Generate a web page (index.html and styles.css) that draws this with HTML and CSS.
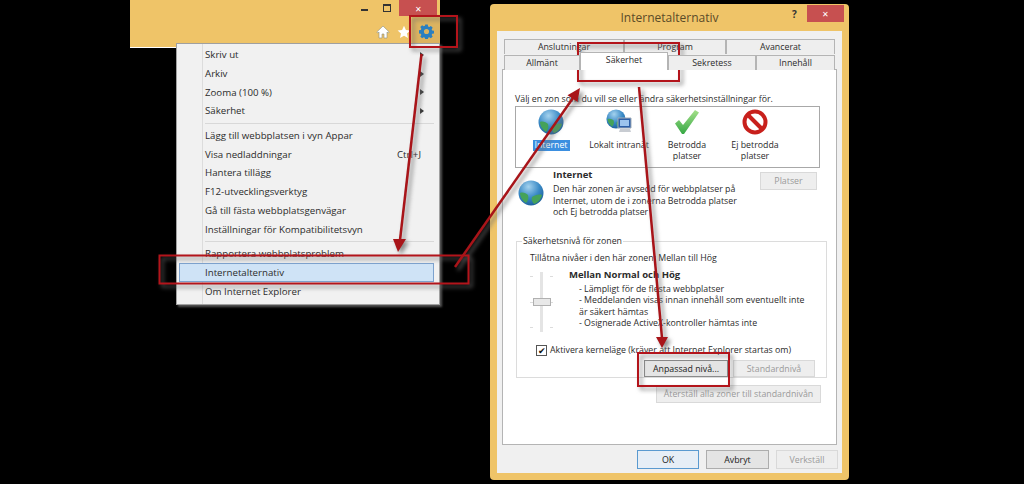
FILE: index.html
```html
<!DOCTYPE html>
<html>
    <head>
        <meta charset="utf-8">
        <title>Internetalternativ</title>
        <link rel="stylesheet" href="styles.css">
    </head>
    <body>
        <svg class="defs" width="0" height="0">
            <defs>
                <radialGradient id="globe-sea" cx="40%" cy="25%" r="80%">
                    <stop offset="0" stop-color="#a4d2ee"/>
                    <stop offset="0.55" stop-color="#3a8ac6"/>
                    <stop offset="1" stop-color="#1a5c98"/>
                </radialGradient>
                <linearGradient id="check-fill" x1="0" y1="0" x2="0" y2="1">
                    <stop offset="0" stop-color="#a5e08a"/>
                    <stop offset="1" stop-color="#36a844"/>
                </linearGradient>
                <symbol id="globe" viewBox="0 0 26 26">
                    <circle cx="13" cy="13" r="12.5" fill="url(#globe-sea)"/>
                    <path d="M2 13c3-1 6 0 8 2 1 3 0 6-2 8-3-2-6-6-6-10zM14 17c3-2 7-3 10-2-1 4-4 8-8 9-2-2-3-5-2-7z" fill="#45a25a"/>
                </symbol>
            </defs>
        </svg>

        <div class="browser-frame">
            <div class="caption-buttons">
                <span class="caption-min"></span>
                <span class="caption-max"></span>
                <span class="caption-close">&#10005;</span>
            </div>
            <div class="toolbar">
                <svg class="tool-icon" viewBox="0 0 14 14"><path d="M7 1 .8 7l1 1L3 7v6h3V9h2v4h3V7l1.200 1 1-1z" fill="#fff" stroke="#8a8f80" stroke-width=".6"/></svg>
                <svg class="tool-icon" viewBox="0 0 14 14"><path d="m7 .8 1.900 4.200 4.500.5-3.400 3 1 4.500L7 10.700 3 13l1-4.500-3.400-3 4.500-.5z" fill="#fff"/></svg>
                <span class="gear-box">
                    <svg class="tool-gear" viewBox="0 0 14 14"><path d="M5.800.5h2.400l.3 1.800 1.100.5 1.500-1 1.700 1.700-1 1.500.5 1.100 1.800.3v2.400l-1.800.3-.5 1.100 1 1.500-1.700 1.700-1.500-1-1.100.5-.3 1.800H5.800l-.3-1.800-1.100-.5-1.500 1-1.700-1.700 1-1.500-.5-1.100-1.800-.3V5.800l1.800-.3.500-1.100-1-1.500 1.700-1.700 1.500 1 1.100-.5zM7 4.600a2.400 2.400 0 1 0 0 4.800 2.400 2.400 0 0 0 0-4.800z" fill="#2a7fc0" fill-rule="evenodd"/></svg>
                </span>
            </div>
        </div>

        <ul class="tools-menu">
            <li class="has-sub">Skriv ut</li>
            <li class="has-sub">Arkiv</li>
            <li class="has-sub">Zooma (100 %)</li>
            <li class="has-sub">Säkerhet</li>
            <li class="menu-sep"></li>
            <li>Lägg till webbplatsen i vyn Appar</li>
            <li>Visa nedladdningar<span class="shortcut">Ctrl+J</span></li>
            <li>Hantera tillägg</li>
            <li>F12-utvecklingsverktyg</li>
            <li>Gå till fästa webbplatsgenvägar</li>
            <li>Inställningar för Kompatibilitetsvyn</li>
            <li class="menu-sep"></li>
            <li>Rapportera webbplatsproblem</li>
            <li class="is-selected">Internetalternativ</li>
            <li>Om Internet Explorer</li>
        </ul>

        <div class="dialog">
            <div class="dialog-title">
                <span>Internetalternativ</span>
                <span class="dialog-help">?</span>
                <span class="dialog-close">&#10005;</span>
            </div>
            <div class="dialog-client">
                <div class="tabs tabs-back">
                    <div class="tab tab-anslutningar">Anslutningar</div>
                    <div class="tab tab-program">Program</div>
                    <div class="tab tab-avancerat">Avancerat</div>
                </div>
                <div class="tabs tabs-front">
                    <div class="tab tab-allmant">Allmänt</div>
                    <div class="tab tab-sakerhet">Säkerhet</div>
                    <div class="tab tab-sekretess">Sekretess</div>
                    <div class="tab tab-innehall">Innehåll</div>
                </div>
                <div class="panel">
                    <p class="intro">Välj en zon som du vill se eller ändra säkerhetsinställningar för.</p>
                    <div class="zones">
                        <div class="zone">
                            <svg class="zone-icon"><use href="#globe"/></svg>
                            <span class="zone-label is-current">Internet</span>
                        </div>
                        <div class="zone">
                            <svg class="zone-icon" viewBox="0 0 26 26">
                                <use href="#globe" width="20" height="20"/>
                                <path d="M12 9h13v10H12z" fill="#2c5fa8" stroke="#a0acb8"/>
                                <path d="M14 11h9v6h-9z" fill="#9cc4ee"/>
                                <path d="M14 20h10l1 3H13z" fill="#c8ccd2"/>
                            </svg>
                            <span class="zone-label">Lokalt intranät</span>
                        </div>
                        <div class="zone">
                            <svg class="zone-icon" viewBox="0 0 26 26"><path d="M1 14.500 5 11l4 5L21 1l4 2.500L10 25h-2z" fill="url(#check-fill)"/></svg>
                            <span class="zone-label">Betrodda<br>platser</span>
                        </div>
                        <div class="zone">
                            <svg class="zone-icon" viewBox="0 0 26 26">
                                <circle cx="13" cy="13" r="10.500" fill="#fff" stroke="#c8201c" stroke-width="4"/>
                                <path d="m6 6 14 14" stroke="#c8201c" stroke-width="4"/>
                            </svg>
                            <span class="zone-label">Ej betrodda<br>platser</span>
                        </div>
                    </div>

                    <div class="zone-info">
                        <svg class="zone-info-icon"><use href="#globe"/></svg>
                        <div class="zone-info-text">
                            <h2>Internet</h2>
                            <p>Den här zonen är avsedd för webbplatser på<br>Internet, utom de i zonerna Betrodda platser<br>och Ej betrodda platser</p>
                        </div>
                        <button class="btn btn-platser" disabled>Platser</button>
                    </div>

                    <fieldset class="level">
                        <legend>Säkerhetsnivå för zonen</legend>
                        <p class="level-allowed">Tillåtna nivåer i den här zonen: Mellan till Hög</p>
                        <div class="level-body">
                            <div class="slider">
                                <span class="slider-track"></span>
                                <span class="slider-ticks slider-ticks-top"></span>
                                <span class="slider-ticks slider-ticks-mid"></span>
                                <span class="slider-ticks slider-ticks-bottom"></span>
                                <span class="slider-thumb"></span>
                            </div>
                            <div class="level-text">
                                <h3>Mellan Normal och Hög</h3>
                                <p>- Lämpligt för de flesta webbplatser<br>- Meddelanden visas innan innehåll som eventuellt inte<br>är säkert hämtas<br>- Osignerade ActiveX-kontroller hämtas inte</p>
                            </div>
                        </div>
                        <div class="kernel-row">
                            <span class="checkbox">&#10004;</span>
                            <span>Aktivera kerneläge (kräver att Internet Explorer startas om)</span>
                        </div>
                        <div class="level-buttons">
                            <button class="btn btn-custom">Anpassad nivå...</button>
                            <button class="btn btn-standard" disabled>Standardnivå</button>
                        </div>
                    </fieldset>
                    <div class="reset-row">
                        <button class="btn btn-reset" disabled>Återställ alla zoner till standardnivån</button>
                    </div>
                </div>
                <div class="dialog-footer">
                    <button class="btn btn-ok">OK</button>
                    <button class="btn btn-cancel">Avbryt</button>
                    <button class="btn btn-apply" disabled>Verkställ</button>
                </div>
            </div>
        </div>

        <!-- Red annotations on top of the screenshot -->
        <svg class="notes" viewBox="0 0 1024 484">
            <g fill="none" stroke="#b3141b" stroke-width="2">
                <rect x="410" y="16" width="47" height="31"/>
                <rect x="578" y="43" width="101" height="38"/>
                <rect x="159.500" y="255.500" width="309" height="28"/>
                <rect x="638" y="353" width="91" height="33"/>
            </g>
            <g stroke="#a81419" stroke-width="2.500" fill="#a81419">
                <path d="M421.500 54 400 240" fill="none"/>
                <path d="M393 239h13l-8 13z" stroke="none"/>
                <path d="M455 267 573 98" fill="none"/>
                <path d="m580 88-2.500 14-10-6.700z" stroke="none"/>
                <path d="M639 87 662 338" fill="none"/>
                <path d="M656 337h12l-6 11z" stroke="none"/>
            </g>
        </svg>
    </body>
</html>
```
FILE: styles.css
```css
/* Overall */

* {
    box-sizing: border-box;
}

html, body {
    padding: 0;
    margin: 0;
}

body {
    background: #000;
    color: #2b2b2b;
    font-family: 'Open Sans', 'Noto Sans', sans-serif;
    font-size: 8.800px;
    position: relative;
    width: 1024px;
    height: 484px;
    overflow: hidden;
}

h2, h3, p, ul, fieldset, legend {
    margin: 0;
    padding: 0;
}

.defs {
    display: block;
    height: 0;
}

/* Browser frame */

.browser-frame {
    background: #efc468;
    border-bottom: 1px solid #fff;
    position: absolute;
    top: 0;
    left: 130px;
    width: 310px;
    height: 48px;
}

.caption-buttons {
    display: flex;
    justify-content: flex-end;
    align-items: flex-start;
    height: 16px;
    padding-right: 3px;
}

.caption-min {
    background: #333;
    width: 7px;
    height: 2px;
    margin: 9px 15px 0 0;
}

.caption-max {
    border: 1px solid #333;
    border-top-width: 2px;
    width: 8px;
    height: 8px;
    margin: 4px 8px 0 0;
}

.caption-close, .dialog-close {
    background: #c75050;
    color: #fff;
    font-size: 8px;
    line-height: 17px;
    text-align: center;
    width: 38px;
    height: 16px;
}

.toolbar {
    display: flex;
    justify-content: flex-end;
    align-items: center;
    gap: 7px;
    height: 31px;
}

.tool-icon {
    width: 14px;
    height: 14px;
}

.gear-box {
    background: #dcb35f;
    display: flex;
    justify-content: center;
    align-items: center;
    width: 28px;
    height: 30px;
    margin-left: -6px;
}

.tool-gear {
    width: 15px;
    height: 15px;
}

/* Tools menu */

.tools-menu {
    background: #f1f1f1;
    border: 1px solid #a0a0a0;
    box-shadow: 2px 2px 2px rgba(120, 120, 120, 0.7);
    list-style: none;
    position: absolute;
    top: 43px;
    left: 176px;
    width: 264px;
    height: 262px;
    padding: 1.500px 2px;
    font-size: 9.700px;
}

.tools-menu::before {
    content: '';
    background: #dcdcdc;
    position: absolute;
    top: 0;
    bottom: 0;
    left: 25px;
    width: 1px;
}

.tools-menu li {
    display: flex;
    justify-content: space-between;
    align-items: center;
    height: 18.700px;
    padding: 0 10px 0 26px;
    margin-right: 3px;
    position: relative;
}

.tools-menu li.has-sub::after {
    content: '';
    border-left: 4px solid #333;
    border-top: 3px solid transparent;
    border-bottom: 3px solid transparent;
}

.tools-menu li.menu-sep {
    height: 6px;
    padding: 0;
    margin-left: 26px;
}

.tools-menu li.menu-sep::before {
    content: '';
    background: #d8d8d8;
    width: 100%;
    height: 1px;
}

.tools-menu li.is-selected {
    background: #cfe3f6;
    border: 1px solid #7da2ce;
    padding-left: 25px;
}

.shortcut {
    margin-right: 3px;
}

/* Dialog */

.dialog {
    background: #efc468;
    border-radius: 4px;
    position: absolute;
    top: 4px;
    left: 490px;
    width: 359px;
    height: 476px;
    display: flex;
    flex-direction: column;
    padding: 0 7px 7px;
}

.dialog-title {
    color: #5a4a28;
    font-size: 12px;
    height: 27px;
    line-height: 27px;
    text-align: center;
    position: relative;
}

.dialog-help {
    color: #333;
    font-weight: 700;
    font-size: 10px;
    line-height: 20px;
    position: absolute;
    top: 0;
    left: 295px;
}

.dialog-close {
    position: absolute;
    top: 1px;
    right: -2px;
    width: 37px;
    height: 17px;
}

.dialog-client {
    background: #f0f0f0;
    flex: 1;
    padding: 8px 5px 0;
    display: flex;
    flex-direction: column;
}

/* Tabs */

.tabs {
    display: flex;
    padding-left: 2px;
}

.tab {
    background: #eeeeee;
    border: 1px solid #b4b4b4;
    border-bottom: 0;
    text-align: center;
    height: 15px;
    line-height: 14px;
}

.tab-anslutningar { width: 120px; }
.tab-program { width: 102px; }
.tab-avancerat { width: 109px; }
.tab-allmant { width: 76px; }
.tab-sekretess { width: 88px; }
.tab-innehall { width: 79px; }

.tabs-back {
    height: 16px;
}

.tabs-front {
    height: 14px;
    position: relative;
    z-index: 1;
}

.tab-sakerhet {
    background: #fff;
    width: 88px;
    height: 18px;
    margin-top: -3px;
}

/* Security panel */

.panel {
    background: #fff;
    border: 1px solid #b4b4b4;
    height: 376px;
    padding: 22px 0 0 12px;
}

.intro {
    height: 14px;
    line-height: 14px;
}

.zones {
    border: 1px solid #a8a8a8;
    display: flex;
    width: 305px;
    height: 62px;
    padding: 2px 0 0 1px;
    text-align: center;
    line-height: 11px;
}

.zone {
    display: flex;
    flex-direction: column;
    align-items: center;
    width: 68px;
}

.zone-icon {
    width: 26px;
    height: 26px;
    margin-bottom: 5px;
}

.zone-label {
    white-space: nowrap;
}

.zone-label.is-current {
    background: #3b8fe0;
    color: #fff;
    padding: 0 2px;
}

.zone-info {
    display: flex;
    margin-top: 0;
    height: 67px;
}

.zone-info-icon {
    width: 26px;
    height: 26px;
    margin: 12px 0 0 3px;
}

.zone-info-text {
    width: 198px;
    margin-left: 9px;
    line-height: 11.500px;
}

.zone-info-text h2 {
    font-size: 9.500px;
    font-weight: 700;
    line-height: 14px;
    margin-bottom: 2px;
}

.btn {
    background: #e4e4e4;
    border: 1px solid #adadad;
    border-radius: 0;
    color: #222;
    font-family: inherit;
    font-size: 8.800px;
    padding: 0;
}

.btn[disabled] {
    background: #eeeeee;
    border-color: #d9d9d9;
    color: #9a9a9a;
}

.btn-platser {
    width: 57px;
    height: 18px;
    margin: 4px 0 0 9px;
}

.level {
    border: 1px solid #dcdcdc;
    width: 311px;
    height: 143px;
    margin-left: 1px;
    min-width: 0;
}

.level legend {
    margin-left: 5px;
    padding: 0 1px;
    line-height: 12px;
}

.level-allowed {
    line-height: 12px;
    margin: 5px 0 0 13px;
}

.level-body {
    display: flex;
    height: 72px;
    margin: 4px 0 0 10px;
}

.slider {
    width: 28px;
    height: 60px;
    margin-top: 4px;
    position: relative;
}

.slider-track {
    background: #e4e4e4;
    position: absolute;
    top: 0;
    bottom: 0;
    left: 13px;
    width: 3px;
}

.slider-ticks {
    border-left: 3px solid #dcdcdc;
    border-right: 3px solid #dcdcdc;
    position: absolute;
    left: 3px;
    width: 23px;
    height: 1px;
}

.slider-ticks-top { top: 4px; }
.slider-ticks-mid { top: 30px; }
.slider-ticks-bottom { top: 55px; }

.slider-thumb {
    background: #e8e8e8;
    border: 1px solid #b0b0b0;
    position: absolute;
    top: 26px;
    left: 6px;
    width: 18px;
    height: 8px;
}

.level-text {
    margin-left: 14px;
    line-height: 11.300px;
}

.level-text h3 {
    font-size: 9.500px;
    font-weight: 700;
    line-height: 13px;
    margin-bottom: 3px;
}

.level-text p {
    padding-left: 10px;
}

.kernel-row {
    display: flex;
    align-items: center;
    gap: 3px;
    margin: 4px 0 0 19px;
    height: 12px;
}

.checkbox {
    background: #fff;
    border: 1px solid #555;
    color: #111;
    font-size: 9px;
    line-height: 10px;
    text-align: center;
    width: 11px;
    height: 11px;
}

.level-buttons {
    display: flex;
    gap: 5px;
    margin: 4px 0 0 127px;
}

.btn-custom {
    border-color: #8a8a8a;
    width: 84px;
    height: 17px;
}

.btn-standard {
    width: 82px;
    height: 17px;
}

.reset-row {
    margin: 7px 0 0 141px;
}

.btn-reset {
    width: 165px;
    height: 18px;
}

.dialog-footer {
    display: flex;
    justify-content: flex-end;
    gap: 7px;
    padding: 5px 0 0;
    margin-right: -1px;
}

.btn-ok {
    background: #e6eef6;
    border-color: #5a9ad0;
    width: 62px;
    height: 19px;
}

.btn-cancel {
    width: 63px;
    height: 19px;
}

.btn-apply {
    width: 62px;
    height: 19px;
}

/* Annotations */

.notes {
    filter: drop-shadow(3px 3px 2px rgba(110, 110, 110, 0.8));
    position: absolute;
    top: 0;
    left: 0;
    width: 1024px;
    height: 484px;
    pointer-events: none;
}
```
